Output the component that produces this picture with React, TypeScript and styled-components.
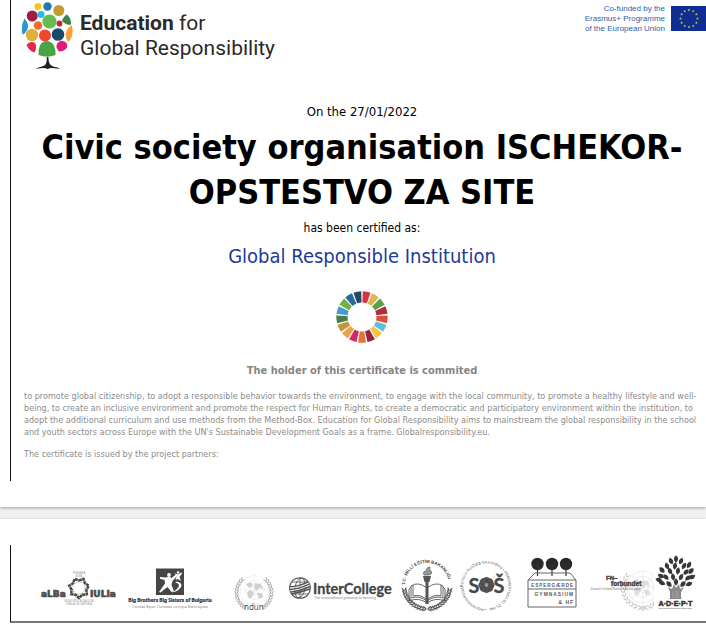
import React from "react";
import styled, { createGlobalStyle } from "styled-components";

const GlobalStyle = createGlobalStyle`
  body {
    margin: 0;
    background: #f0f1f3;
    font-family: "DejaVu Sans Condensed", "DejaVu Sans", sans-serif;
    color: #000;
  }
`;

const Viewer = styled.main`
  display: flex;
  flex-direction: column;
  gap: 12px;
  overflow: hidden;
`;

const Sheet = styled.section<{ $first?: boolean }>`
  background: #fff;
  padding: ${(p) => (p.$first ? "0 0 26px 10px" : "26px 0 14px 10px")};
  box-shadow: 0 1px 3px rgba(0, 0, 0, 0.35);
`;

const Certificate = styled.article`
  border-left: 1px solid #111;
  padding-bottom: 11px;
`;

const Header = styled.header`
  display: flex;
  justify-content: space-between;
  align-items: flex-start;
  height: 102px;
  padding-left: 10px;
`;

const Brand = styled.div`
  display: flex;
  gap: 6px;
`;

const BrandName = styled.p`
  margin: 11px 0 0;
  font: 21px/25px Roboto, sans-serif;
  color: #2b2829;
`;

const Funding = styled.div`
  display: flex;
  gap: 6px;
  padding-top: 4px;
`;

const FundingText = styled.p`
  margin: 0;
  font: 8px/10px "Liberation Sans", Arial, sans-serif;
  color: #2d62a8;
  text-align: right;
`;

const Flag = styled.svg`
  margin-top: 2px;
`;

const Body = styled.div`
  display: flex;
  flex-direction: column;
  align-items: center;
  padding: 0 6px 0 13px;
  text-align: center;
`;

const Lead = styled.p<{ $small?: boolean }>`
  margin: 0;
  font-size: ${(p) => (p.$small ? 12 : 13)}px;
  line-height: 20px;
`;

const Title = styled.h1`
  margin: 3px 0;
  font-size: 34px;
  line-height: 45px;
`;

const Award = styled.h2`
  margin: 4px 0 21px;
  font-size: 20px;
  font-weight: 400;
  line-height: 28px;
  color: #213a9b;
`;

const Pledge = styled.h3`
  margin: 18px 0 9px;
  font-size: 11px;
  line-height: 20px;
  color: #858585;
`;

const Terms = styled.p`
  align-self: stretch;
  margin: 0 0 10px;
  font-size: 9px;
  line-height: 12px;
  text-align: left;
  color: #8c8c8c;
`;

const Partners = styled.footer`
  display: flex;
  padding: 10px 0 8px 27px;
  border-left: 1px solid #111;
  border-bottom: 2px solid #777;
`;

const PartnerLogo = styled.svg`
  flex: none;
  display: block;
`;

const Tree = () => (
  <svg width="53" height="70" viewBox="21 0 53 70" role="img" aria-label="Tree">
    <circle cx="38" cy="6.5" r="3.6" fill="#fcc419" />
    <circle cx="47.5" cy="6.5" r="4.2" fill="#2277ad" />
    <circle cx="58.8" cy="10.5" r="5.5" fill="#c49a33" />
    <circle cx="32.2" cy="16" r="5.5" fill="#a21c45" />
    <circle cx="41" cy="14.5" r="3.5" fill="#26bde2" />
    <circle cx="49.5" cy="21.5" r="7.1" fill="#63be50" />
    <path d="M67 14.5Q71.5 18.5 71 24.5Q66 25.5 62 21Q63.5 16 67 14.5Z" fill="#3f824b" />
    <circle cx="38" cy="25.5" r="4.3" fill="#f36d35" />
    <circle cx="59.5" cy="23.5" r="2.9" fill="#ca2037" />
    <path d="M24.5 18.5Q30 25 27 30Q25 34 22.5 34.5Q20.5 26 24.5 18.5Z" fill="#2b96d3" />
    <circle cx="32" cy="35" r="6.2" fill="#dfb13b" />
    <circle cx="45" cy="35.5" r="6" fill="#ef462c" />
    <circle cx="58" cy="34.5" r="6.3" fill="#174a6c" />
    <path d="M71.5 25Q75 34 68.5 42Q64 37 66.5 31Q68.5 27 71.5 25Z" fill="#f8a334" />
    <path d="M26.5 45Q30 40 35 43Q37.5 47 34.5 52.5Q29 51 26.5 45Z" fill="#e62746" />
    <path d="M38.5 55Q38 44 44 41.5Q49 39.5 53 44Q56 49 55.5 55Q47 58.5 38.5 55Z" fill="#4ba347" />
    <path d="M59 51.5Q54.5 46 58 42.5Q62 39 66 42.5Q68.5 46 66 49Q63 51.5 59 51.5Z" fill="#e11c78" />
    <path d="M46.8 57H48.4C48.5 63 50 66 55 67Q58 67.2 60 69Q54 68.2 50.5 68L47.5 69L44.5 68Q40 68 36 69Q38 67 42 66.5C46 65.5 46.8 63 46.8 57Z" fill="#222" />
  </svg>
);

const goalColors = [
  "#d83248", "#ddb74f", "#5d9d4b", "#b42c3c", "#dc5039", "#59bfdf",
  "#f6c544", "#982447", "#e1743f", "#d02c6c", "#eca04a", "#bd963f",
  "#477f4a", "#459bd3", "#6fb245", "#286c9e", "#244967",
];

const GoalWheel = () => (
  <svg width="52" height="52" viewBox="-26 -26 52 52" role="img" aria-label="Sustainable Development Goals">
    {goalColors.map((color, i) => {
      const step = (Math.PI * 2) / 17;
      const a = i * step + 0.03;
      const b = (i + 1) * step - 0.03;
      const at = (r: number, t: number) => `${r * Math.sin(t)} ${-r * Math.cos(t)}`;
      return (
        <path
          key={color}
          fill={color}
          d={`M${at(14.5, a)}L${at(25.7, a)}A25.7 25.7 0 0 1 ${at(25.7, b)}L${at(14.5, b)}A14.5 14.5 0 0 0 ${at(14.5, a)}Z`}
        />
      );
    })}
  </svg>
);

const EuFlag = () => (
  <Flag width="35" height="25" viewBox="0 0 35 25" role="img" aria-label="European Union flag">
    <rect width="35" height="25" fill="#102d91" />
    {Array.from({ length: 12 }, (_, i) => {
      const t = (i * Math.PI) / 6;
      return (
        <path
          key={i}
          transform={`translate(${18 + 8.5 * Math.sin(t)} ${12.5 - 8.5 * Math.cos(t)})`}
          d="M0 -1.4L.4 -.4L1.4 -.4L.6 .3L.9 1.3L0 .7L-.9 1.3L-.6 .3L-1.4 -.4L-.4 -.4Z"
          fill="#c9c832"
        />
      );
    })}
  </Flag>
);

const starPoints = Array.from({ length: 14 }, (_, i) => {
  const r = i % 2 === 0 ? 7.6 : 10;
  const t = (i * Math.PI) / 7;
  return `${r * Math.sin(t)},${-r * Math.cos(t)}`;
}).join(" ");

const AlbaIulia = () => (
  <PartnerLogo width="84" height="58" viewBox="38 555 84 58" role="img" aria-label="Alba Iulia">
    <g fill="#4c4c4c" stroke="#4c4c4c" strokeWidth=".7" fontFamily="DejaVu Sans, sans-serif" fontWeight="700" fontSize="9">
      <text x="41" y="597">aLBa</text>
      <text x="90" y="597">IULIa</text>
    </g>
    <g transform="translate(79 588)" fill="none">
      <polygon points={starPoints} stroke="#484848" strokeWidth="2.6" strokeDasharray="3 .5" />
      <circle r="6.2" stroke="#999" strokeWidth=".8" strokeDasharray="1.5 1" />
    </g>
    <g fill="#999" fontFamily="Liberation Sans, sans-serif" fontSize="2.6" textAnchor="middle">
      <text x="79" y="573.5">PRIMĂRIA</text>
      <text x="79" y="576.5">ALBA</text>
      <text x="79" y="602">MUNICIPIUL ALBA IULIA</text>
      <text x="79" y="605">CEALALTĂ CAPITALĂ</text>
    </g>
  </PartnerLogo>
);

const BigBrothers = () => (
  <PartnerLogo width="101" height="58" viewBox="122 555 101 58" role="img" aria-label="Big Brothers Big Sisters of Bulgaria">
    <rect x="156" y="568.5" width="28" height="26.5" fill="#464646" />
    <circle cx="169" cy="575" r="1.9" fill="#fff" />
    <path d="M160 577L166 577.5Q169 576 171.5 578L176 574.5L177 576L172.5 581L171.5 585L174 591.5L171.5 592L167.5 587L160.5 592.5L159 592L165 583.5L164.5 580L160 578.8Z" fill="#fff" />
    <circle cx="178" cy="572.5" r="1.3" fill="#fff" />
    <path d="M174.5 573L177.5 574.5L181.5 572.5L182 573.5L179.5 577L181 581L178 579L175.5 580L176.5 576Z" fill="#fff" />
    <path d="M177 581.5Q183 583 181 587Q178 591.5 172 592.5Q179 588.5 179 585.5Q179 583 175 582.5Z" fill="#fff" />
    <text x="170" y="601.5" textAnchor="middle" fill="#333" stroke="#333" strokeWidth=".2" fontFamily="Noto Sans, sans-serif" fontWeight="700" fontSize="4.8">Big Brothers Big Sisters of Bulgaria</text>
    <text x="170" y="607.5" textAnchor="middle" fill="#888" fontFamily="Noto Sans, sans-serif" fontSize="4.3">Голям Брат Голяма сестра България</text>
  </PartnerLogo>
);

const Laurel = ({ cx, cy, r, color, from = 100, to = 205, size = 1 }: {
  cx: number; cy: number; r: number; color: string; from?: number; to?: number; size?: number;
}) => (
  <g transform={`translate(${cx} ${cy})`} fill={color}>
    {[1, -1].map((side) => (
      <g key={side} transform={`scale(${side} 1)`}>
        {Array.from({ length: 12 }, (_, i) => (
          <g key={i} transform={`rotate(${from + ((to - from) * i) / 11}) translate(0 ${-r}) scale(${size})`}>
            <ellipse cx="0" cy="-1.4" rx="2.3" ry=".7" transform="rotate(28)" />
            <ellipse cx="0" cy="1.4" rx="2.3" ry=".7" transform="rotate(-28)" />
          </g>
        ))}
      </g>
    ))}
  </g>
);

const Globe = ({ cx, cy, r, color }: { cx: number; cy: number; r: number; color: string }) => (
  <g transform={`translate(${cx} ${cy})`} fill="none" stroke={color} strokeWidth=".5">
    {[1, 0.66, 0.33].map((k) => <circle key={k} r={r * k} />)}
    {[0, 45, 90, 135].map((a) => <path key={a} d={`M${-r} 0H${r}`} transform={`rotate(${a})`} />)}
  </g>
);

const continents = "M-8 -7L-3 -9L-1 -6L-4 -3L-6 -4ZM1 -8L7 -7L9 -2L5 -3L3 0L0 -3ZM-7 1L-3 -1L0 2L-2 6L-4 8L-6 6ZM3 2L8 2L9 6L5 8Z";

const UnitedNations = () => (
  <PartnerLogo width="58" height="58" viewBox="223 555 58 58" role="img" aria-label="ndun">
    <Globe cx={254.5} cy={590} r={14.5} color="#e4e4e4" />
    <path d={continents} transform="translate(254 591)" fill="#d0d0d0" />
    <Laurel cx={254} cy={592.5} r={17.5} color="#aaa" from={40} to={146} size={0.85} />
    <text x="244" y="609.5" fill="#555" fontFamily="Noto Sans, sans-serif" fontSize="8">ndun</text>
  </PartnerLogo>
);

const InterCollege = () => (
  <PartnerLogo width="115" height="58" viewBox="281 555 115 58" role="img" aria-label="InterCollege">
    <g transform="translate(300 588)" fill="none" stroke="#555">
      <circle r="10.3" strokeWidth="1.1" />
      <ellipse rx="5" ry="10" strokeWidth=".9" transform="rotate(10)" />
      <path d="M0 -10V10M-8 -6H8M-8 6H8" strokeWidth=".8" />
      <path d="M-10.5 -1Q-2 -1 8 -6M-10.5 1.5Q0 1 9.5 -4M-9.5 4Q0 3 10 -1.5M-8.5 6Q0 4.5 10 1" strokeWidth="1.6" />
      <path d="M-10 0Q-1 0 9 -5M-10 3Q0 2 10 -3" stroke="#fff" strokeWidth=".7" />
    </g>
    <text x="313" y="593.5" fill="#444" stroke="#444" strokeWidth=".3" fontFamily="Lato, sans-serif" fontWeight="700" fontSize="14.5">InterCollege</text>
    <text x="314" y="598.5" fill="#888" fontFamily="Lato, sans-serif" fontStyle="italic" fontSize="4">The international gateway to learning</text>
  </PartnerLogo>
);

const Ministry = () => (
  <PartnerLogo width="61" height="58" viewBox="396 555 61 58" role="img" aria-label="T.C. Millî Eğitim Bakanlığı">
    <path id="ministry-arc" d="M405 585A22 22 0 0 1 449 585" fill="none" />
    <text fill="#444" fontFamily="Liberation Sans, sans-serif" fontWeight="700" fontSize="4.4">
      <textPath href="#ministry-arc">T.C. MİLLÎ EĞİTİM BAKANLIĞI</textPath>
    </text>
    <Laurel cx={427} cy={586} r={23} color="#555" from={97} to={172} />
    <g fill="#fff" stroke="#555" strokeWidth=".9">
      <path d="M427 588Q418 581 411 586V598Q419 595 427 601Q435 595 443 598V586Q436 581 427 588Z" />
      <path d="M411 587L409 589V601Q419 597 427 603Q435 597 445 601V589L443 587" fill="none" />
      <path d="M413 585V596Q420 594 426 599M441 585V596Q434 594 428 599" fill="none" />
    </g>
    <path d="M423 576H431L429.5 582H428.5V604H425.5V582H424.5Z" fill="#555" />
    <path d="M424 575Q422 571 427 571Q425 568 430 567Q429 570 431 571Q433 574 429 575Z" fill="#999" stroke="#555" strokeWidth=".7" />
  </PartnerLogo>
);

const Sos = () => (
  <PartnerLogo width="62" height="58" viewBox="457 555 62 58" role="img" aria-label="SOŠ">
    <path id="sos-ring" d="M486 608.5A22.5 22.5 0 0 1 486 563.5A22.5 22.5 0 0 1 486 608.5" fill="none" />
    <text fill="#555" fontFamily="Liberation Sans, sans-serif" fontSize="3.7">
      <textPath href="#sos-ring">• POĽNOHOSPODÁRSTVA A SLUŽIEB NA VIDIEKU • PREDMESTSKÁ 82, ŽILINA</textPath>
    </text>
    <g fill="#484848" stroke="#484848" strokeWidth=".3" fontFamily="Lato, sans-serif" fontWeight="700" fontSize="20">
      <text x="468.5" y="592.5">S</text>
      <text x="493.5" y="592.5">Š</text>
    </g>
    <g transform="translate(486.5 585)">
      {Array.from({ length: 8 }, (_, i) => (
        <ellipse key={i} cx="0" cy="-4.5" rx="3" ry="3.3" transform={`rotate(${i * 45})`} fill="#555" stroke="#333" strokeWidth=".5" />
      ))}
      <circle r="2.4" fill="#999" stroke="#444" strokeWidth=".7" />
    </g>
  </PartnerLogo>
);

const Espergaerde = () => (
  <PartnerLogo width="65" height="58" viewBox="519 555 65 58" role="img" aria-label="Espergærde Gymnasium & HF">
    {[537.5, 552, 566].map((x) => (
      <g key={x}>
        <circle cx={x} cy="564" r="6.2" fill="#292929" />
        <path d={`M${x} 564V576`} stroke="#333" strokeWidth="1.2" />
      </g>
    ))}
    <path d="M528 580L535 573H570L576 580V607H528ZM528 580H576M528 589H576" fill="none" stroke="#666" strokeWidth="1" />
    <g fill="#555" fontFamily="Liberation Sans, sans-serif" fontWeight="700" fontSize="4.9" textAnchor="end" letterSpacing="1">
      <text x="574" y="586.5" fontSize="4.5">ESPERGÆRDE</text>
      <text x="574" y="595.5">GYMNASIUM</text>
      <text x="574" y="603.5">& HF</text>
    </g>
  </PartnerLogo>
);

const FnForbundet = () => (
  <PartnerLogo width="70" height="58" viewBox="584 555 70 58" role="img" aria-label="FN-forbundet">
    <Globe cx={643} cy={587} r={16} color="#d8d8d8" />
    <path d={continents} transform="translate(641 588)" fill="#ddd" />
    <Laurel cx={643} cy={588} r={20} color="#ccc" from={50} to={180} />
    <g fill="#444" stroke="#444" strokeWidth=".4" fontFamily="Liberation Sans, sans-serif" fontWeight="700">
      <text x="606" y="580" fontSize="6">FN–</text>
      <text x="611" y="585.5" fontSize="6.5">forbundet</text>
    </g>
    <text x="591" y="589.5" fill="#777" fontFamily="Liberation Sans, sans-serif" fontSize="3.3">Danish United Nations Association</text>
  </PartnerLogo>
);

const adeptLeaves = [
  [676, 559, 0], [671, 561, -25], [681, 561, 25], [667, 566, -20], [675, 566, 10],
  [684, 566, 30], [689, 565, 30], [662, 570, -45], [670, 571, -25], [678, 571, 10],
  [686, 572, 40], [691, 571, 45], [661, 576, -60], [666, 577, -40], [673, 577, -10],
  [681, 577, 25], [688, 578, 50], [692, 577, 60], [662, 583, -65], [669, 584, -45],
  [683, 584, 45], [689, 584, 65], [659, 580, -70], [676, 582, 0],
];

const Adept = () => (
  <PartnerLogo width="44" height="58" viewBox="654 555 44 58" role="img" aria-label="ADEPT">
    {adeptLeaves.map(([x, y, a]) => (
      <path key={`${x}-${y}`} transform={`translate(${x} ${y}) rotate(${a})`} d="M0 -3.7Q4.3 0 0 3.7Q-4.3 0 0 -3.7Z" fill="#383838" />
    ))}
    <path d="M668 587L672 589L674 584L676 588L679 584L680 589L684 587L681 592V598L682 599H669L670 598V592Z" fill="#888" />
    <path d="M673 591V598M676 590V598M678 591V598" stroke="#bbb" strokeWidth=".6" />
    <text x="675.5" y="606" fill="#333" stroke="#333" strokeWidth=".5" textAnchor="middle" fontFamily="Liberation Sans, sans-serif" fontWeight="700" fontSize="7.2">A·D·E·P·T</text>
    <path d="M659 608.5H692" stroke="#999" strokeWidth=".8" strokeDasharray="2 .4" />
  </PartnerLogo>
);

export default function App() {
  return (
    <>
      <GlobalStyle />
      <Viewer>
        <Sheet $first>
          <Certificate>
            <Header>
              <Brand>
                <Tree />
                <BrandName>
                  <strong>Education</strong> for
                  <br />
                  Global Responsibility
                </BrandName>
              </Brand>
              <Funding>
                <FundingText>
                  Co-funded by the
                  <br />
                  Erasmus+ Programme
                  <br />
                  of the European Union
                </FundingText>
                <EuFlag />
              </Funding>
            </Header>
            <Body>
              <Lead>On the 27/01/2022</Lead>
              <Title>Civic society organisation ISCHEKOR-OPSTESTVO ZA SITE</Title>
              <Lead $small>has been certified as:</Lead>
              <Award>Global Responsible Institution</Award>
              <GoalWheel />
              <Pledge>The holder of this certificate is commited</Pledge>
              <Terms>
                to promote global citizenship, to adopt a responsible behavior towards the environment, to engage with
                the local community, to promote a healthy lifestyle and well-being, to create an inclusive environment
                and promote the respect for Human Rights, to create a democratic and participatory environment within
                the institution, to adopt the additional curriculum and use methods from the Method-Box. Education for
                Global Responsibility aims to mainstream the global responsibility in the school and youth sectors
                across Europe with the UN's Sustainable Development Goals as a frame. Globalresponsibility.eu.
              </Terms>
              <Terms>The certificate is issued by the project partners:</Terms>
            </Body>
          </Certificate>
        </Sheet>
        <Sheet>
          <Partners>
            <AlbaIulia />
            <BigBrothers />
            <UnitedNations />
            <InterCollege />
            <Ministry />
            <Sos />
            <Espergaerde />
            <FnForbundet />
            <Adept />
          </Partners>
        </Sheet>
      </Viewer>
    </>
  );
}
